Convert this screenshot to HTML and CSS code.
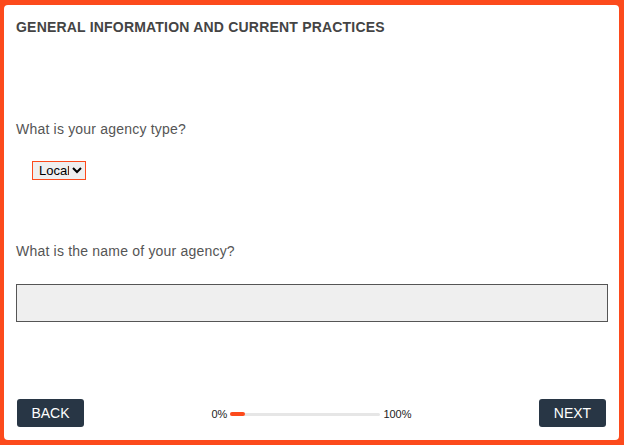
FILE: index.html
```html
<!DOCTYPE html>
<html lang="en">
<head>
    <meta charset="UTF-8">
    <meta name="viewport" content="width=device-width, initial-scale=1.0">
    <title>Agency Survey</title>
    <link rel="stylesheet" href="styles.css">
</head>
<body>
    <div class="card">
        <h1 class="section-title">GENERAL INFORMATION AND CURRENT PRACTICES</h1>

        <p class="question q-first">What is your agency type?</p>
        <select class="agency-type" name="agency-type">
            <option value="local">Local</option>
            <option value="state">State</option>
            <option value="federal">Federal</option>
        </select>

        <p class="question q-second">What is the name of your agency?</p>
        <input class="agency-name" type="text" name="agency-name">

        <div class="footer">
            <button class="nav-btn">BACK</button>
            <div class="progress">
                <span>0%</span>
                <div class="progress-track"><div class="progress-fill"></div></div>
                <span>100%</span>
            </div>
            <button class="nav-btn">NEXT</button>
        </div>
    </div>
</body>
</html>
```

FILE: styles.css
```css
html, body {
    height: 100%;
}
body {
    margin: 0;
    padding: 5px 5px 5px 4px;
    box-sizing: border-box;
    background-color: #fc4a1c;
    font-family: "Liberation Sans", Arial, sans-serif;
}
.card {
    height: 100%;
    box-sizing: border-box;
    background-color: #fff;
    border-radius: 4px;
    padding: 14px 11px 13px 12px;
    display: flex;
    flex-direction: column;
}
.section-title {
    margin: 0;
    font-size: 14px;
    line-height: 16px;
    font-weight: bold;
    letter-spacing: 0.2px;
    color: #444;
}
.question {
    margin: 0;
    font-size: 14px;
    line-height: 18px;
    letter-spacing: 0.2px;
    color: #555;
}
.q-first {
    margin-top: 85px;
}
.q-second {
    margin-top: 62px;
}
.agency-type {
    align-self: flex-start;
    margin: 23px 0 0 16px;
    width: 54px;
    height: 19px;
    font-family: "Liberation Sans", Arial, sans-serif;
    font-size: 13px;
    color: #000;
    background-color: #efefef;
    border: 1px solid #fc4a1c;
    border-radius: 0;
    padding: 0 0 0 2px;
}
.agency-name {
    margin-top: 24px;
    height: 38px;
    box-sizing: border-box;
    width: 100%;
    background-color: #efefef;
    border: 1px solid #555;
    border-radius: 0;
}
.footer {
    margin: auto 2px 0 1px;
    display: flex;
    justify-content: space-between;
    align-items: center;
}
.nav-btn {
    width: 67px;
    height: 28px;
    background-color: #283645;
    color: #fff;
    border: none;
    border-radius: 3px;
    font-family: "Liberation Sans", Arial, sans-serif;
    font-size: 14px;
    padding: 0;
    cursor: pointer;
}
.progress {
    display: flex;
    align-items: center;
    gap: 3px;
    font-size: 11px;
    color: #222;
    padding-top: 2px;
}
.progress-track {
    width: 150px;
    height: 3px;
    background-color: #e6e6e6;
    border-radius: 2px;
    display: flex;
    align-items: center;
}
.progress-fill {
    width: 15px;
    height: 4px;
    background-color: #fc4a1c;
    border-radius: 2px;
}
```
